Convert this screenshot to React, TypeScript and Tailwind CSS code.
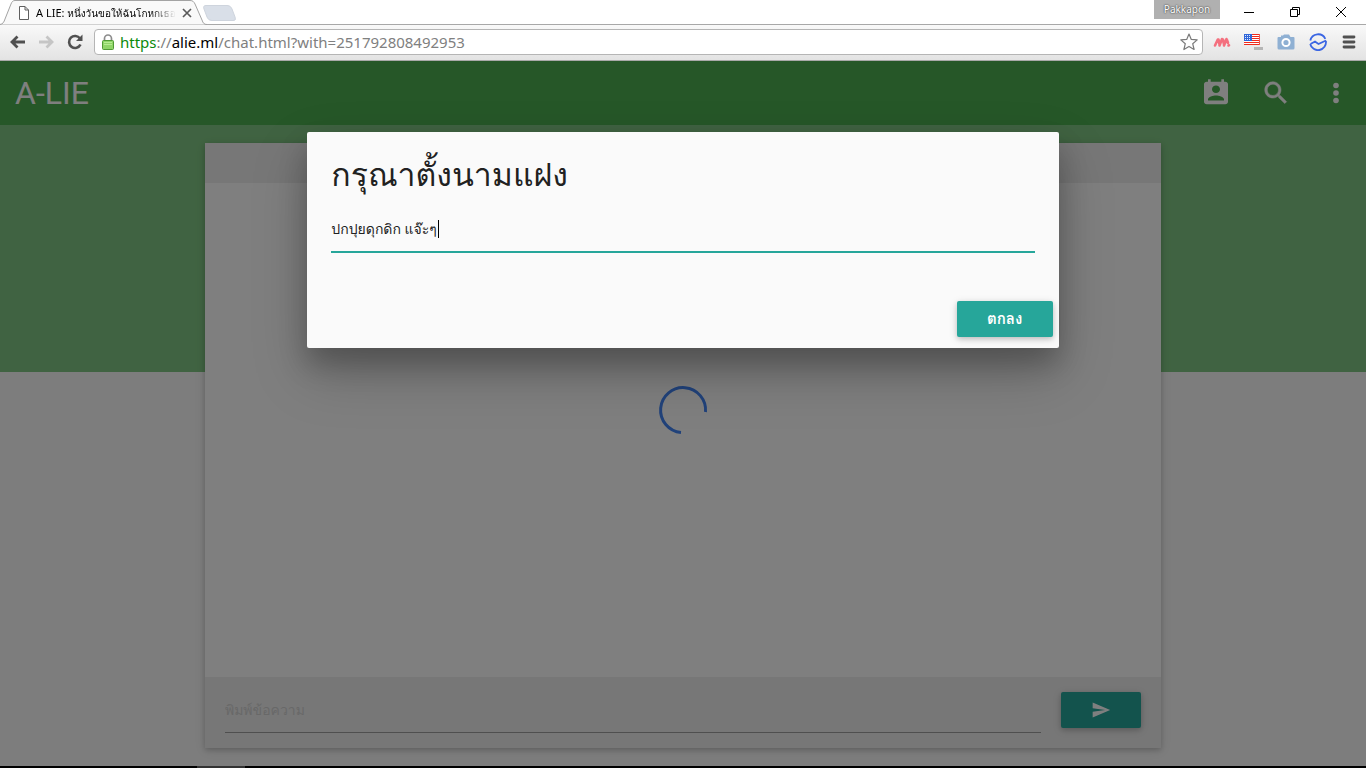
import React, { useState } from "react";

const THAI = "font-['Roboto','Loma','Garuda','Waree','Noto_Sans_Thai_Looped','Noto_Sans_Thai','Noto_Sans',sans-serif]";

const STRIPES = [1, 3, 5, 7, 9, 11];

function TabStrip() {
  return (
    <div className="flex h-6 items-start bg-white">
      <div className="relative flex h-6 w-[206px] shrink-0 items-center pl-[18px] pt-0.5">
        <svg className="absolute left-0 top-0" width="240" height="25" viewBox="0 0 240 25" aria-hidden="true">
          <path d="M0 24.5 C3 24 4 22 5 19 L11 4 C12 1.500 13 .5 15 .5 H190 C193 .5 194 2 195 4 L202 20 C203 23 204 24.500 207 24.500" fill="#f9f9f9" stroke="#a3a3a3" />
          <path d="M206 5.500 H227 C230 5.500 231 7 232 9 L235 17 C236 20 235 20.500 233 20.500 H212 C209 20.500 208 19 207 17 L204 9 C203 6.500 204 5.500 206 5.500Z" fill="#d9dfe8" stroke="#ced4dd" />
        </svg>
        <svg className="relative shrink-0" width="12" height="14" viewBox="0 0 12 14" fill="#fff" stroke="#5f5f5f" aria-hidden="true">
          <path d="M1.500 .5 H7 L10.500 4 V13.500 H1.500Z M7 .5 V4 H10.500" />
        </svg>
        <span className="relative ml-1.5 w-[140px] whitespace-nowrap font-['Noto_Sans','Loma',sans-serif] text-[11px] leading-5 text-black [mask-image:linear-gradient(to_right,#000_115px,transparent_140px)]">
          A LIE: <span className="text-[10px]">หนึ่งวันขอให้ฉันโกหกเธอ</span>
        </span>
        <button type="button" aria-label="Close tab" className="relative ml-1.5 shrink-0">
          <svg width="10" height="10" viewBox="0 0 10 10" stroke="#5a5a5a" strokeWidth="1.7"><path d="M1 1 9 9M9 1 1 9" /></svg>
        </button>
      </div>
      <div className="ml-auto flex items-start">
        <span className="flex h-[19px] w-[66px] items-center justify-center bg-[#b0b0b0] font-['Noto_Sans',sans-serif] text-[10px] text-white [text-shadow:0_0_2px_#444,0_0_1px_#444]">Pakkapon</span>
        <div className="ml-1.5 mr-0.5 flex h-6 items-center">
          <button type="button" aria-label="Minimize" className="flex w-[46px] justify-center"><svg width="10" height="10" stroke="#000"><path d="M0 5.500H10" /></svg></button>
          <button type="button" aria-label="Restore" className="flex w-[46px] justify-center"><svg width="10" height="10" fill="none" stroke="#000"><path d="M.5 2.500H7.500V9.500H.5Z M2.500 2.500V.5H9.500V7.500H7.500" /></svg></button>
          <button type="button" aria-label="Close" className="flex w-[46px] justify-center"><svg width="10" height="10" stroke="#000"><path d="M0 0 10 10M10 0 0 10" /></svg></button>
        </div>
      </div>
    </div>
  );
}

function Flag() {
  return (
    <svg className="block" width="20" height="18" viewBox="0 0 20 18" shapeRendering="crispEdges" aria-hidden="true">
      <rect x="0" y="1" width="16" height="11" fill="#ffffff" />
      {STRIPES.map((y) => <rect key={y} x="0" y={y} width="16" height="1" fill="#f02a1c" />)}
      <rect x="15" y="1" width="1" height="11" fill="#ee5a50" />
      <rect x="0" y="1" width="8" height="7" fill="#2f66d8" />
      {[2, 4, 6].map((y) => [1, 3, 5].map((x) => <rect key={x + "-" + y} x={x} y={y} width="1" height="1" fill="#dce8ff" />))}
      <rect x="10" y="14" width="9" height="3" fill="#b5b5b5" />
    </svg>
  );
}

function AddressBar() {
  return (
    <div className="flex h-[37px] items-center border-y border-t-[#a8a8a8] border-b-[#a9a9a9] bg-gradient-to-b from-[#f9f9f9] to-[#e3e3e3] pb-px pl-[9px] pr-2.5">
      <button type="button" aria-label="Back"><svg className="block" width="17" height="14" viewBox="0 0 17 14" fill="none" stroke="#505050" strokeWidth="2.800"><path d="M16 7H3M8.500 1.500 3 7l5.500 5.500" /></svg></button>
      <button type="button" aria-label="Forward" className="ml-3"><svg className="block" width="17" height="14" viewBox="0 0 17 14" fill="none" stroke="#c5c5c5" strokeWidth="2.800"><path d="M1 7H14M8.500 1.500 14 7l-5.500 5.500" /></svg></button>
      <button type="button" aria-label="Reload" className="ml-3">
        <svg className="block" width="16" height="16" viewBox="0 0 16 16"><path d="M13 4.500A6 6 0 1 0 13.500 10.500" fill="none" stroke="#505050" strokeWidth="2.600" /><path d="M15.500 .5V7H9Z" fill="#505050" /></svg>
      </button>
      <div className="ml-[11px] flex h-[26px] min-w-0 flex-1 items-center rounded-sm border border-[#b5b5b5] bg-white pl-[7px] pr-1">
        <svg className="shrink-0" width="12" height="16" viewBox="0 0 12 16" aria-hidden="true">
          <path d="M2.500 8V4.500a3.500 3.500 0 0 1 7 0V8" fill="none" stroke="#8c8c8c" strokeWidth="1.700" />
          <rect x=".5" y="6.500" width="11" height="9" rx="1" fill="#8fd568" stroke="#4f9a34" />
          <path d="M2 8.500h8M2 10.500h8" stroke="#b6ec92" />
        </svg>
        <span className="ml-1.5 whitespace-nowrap font-['Noto_Sans',sans-serif] text-[15px] leading-5 text-[#808080]">
          <span className="text-[#0b8a0b]">https</span>://<span className="text-black">alie.ml</span>/chat.html?with=251792808492953
        </span>
        <button type="button" aria-label="Bookmark this page" className="ml-auto">
          <svg className="block" width="18" height="18" viewBox="0 0 18 18"><path d="M9 1 11.300 6.400 17.200 6.900 12.700 10.700 14.100 16.500 9 13.400 3.900 16.500 5.300 10.700 .8 6.900 6.700 6.400Z" fill="#fff" stroke="#7a7a7a" strokeWidth="1.200" strokeLinejoin="round" /></svg>
        </button>
      </div>
      <div className="flex items-center pl-2.5">
        <button type="button" aria-label="Extension" className="w-[31px]">
          <svg className="block" width="18" height="12" viewBox="0 0 18 12" fill="none" stroke="#f4707f" strokeWidth="2.600" strokeLinecap="round"><path d="M2 9.500 4.800 3.500M6.500 9.500 9 3M11 9.500 13.500 3M5.500 3.500 6.500 8.500M10 3.500 11 8.500M14 4 15 7" /><path d="M15.500 9.500 16 9.300" /></svg>
        </button>
        <button type="button" aria-label="Language" className="w-[33px]"><Flag /></button>
        <button type="button" aria-label="Capture" className="w-8">
          <svg className="block" width="18" height="16" viewBox="0 0 18 16"><path d="M1.500 3H4V1.500H6L7 .5H12L13.500 3H16.500Q17.500 3 17.500 4V14Q17.500 15.500 16 15.500H2Q.5 15.500 .5 14V4Q.5 3 1.500 3Z" fill="#8fb0d3" /><circle cx="9" cy="8.500" r="3.600" fill="#8fb0d3" stroke="#fff" strokeWidth="2" /></svg>
        </button>
        <button type="button" aria-label="Messenger extension" className="w-[33px]">
          <svg className="block" width="18" height="18" viewBox="0 0 18 18" fill="none" stroke="#3b66e3" strokeWidth="1.800"><path d="M1.300 7.500A8 8 0 0 1 16.300 5.800M16.900 8A8 8 0 0 1 1.200 11M1.500 11 6 8.500 9.500 11 17 7.500" /></svg>
        </button>
        <button type="button" aria-label="Menu"><svg className="block" width="14" height="14" viewBox="0 0 14 14" stroke="#505050" strokeWidth="2.800" strokeLinecap="round"><path d="M2 2H12M2 7H12M2 12H12" /></svg></button>
      </div>
    </div>
  );
}

function AppBar() {
  return (
    <header className="flex h-16 shrink-0 items-center bg-[#4caf50] pl-[15px] pr-3 text-white">
      <h1 className="font-['Roboto',sans-serif] text-[32px] leading-10">A-LIE</h1>
      <nav className="ml-auto flex items-center gap-6">
        <button type="button" aria-label="Contacts" className="flex size-9 items-center justify-center"><svg width="32" height="30" viewBox="0 0 24 24" preserveAspectRatio="none" fill="currentColor"><path d="M19 3h-1V1h-2v2H8V1H6v2H5c-1.110 0-2 .9-2 2v14c0 1.100.89 2 2 2h14c1.100 0 2-.9 2-2V5c0-1.100-.9-2-2-2zm-7 3c1.660 0 3 1.340 3 3s-1.340 3-3 3-3-1.340-3-3 1.340-3 3-3zm6 12H6v-1c0-2 4-3.100 6-3.100s6 1.100 6 3.100v1z" /></svg></button>
        <button type="button" aria-label="Search" className="flex size-9 items-center justify-center"><svg width="30" height="30" viewBox="0 0 24 24" fill="currentColor" stroke="currentColor" strokeWidth=".4"><path d="M15.500 14h-.79l-.28-.27C15.410 12.590 16 11.110 16 9.500 16 5.910 13.090 3 9.500 3S3 5.910 3 9.500 5.910 16 9.500 16c1.610 0 3.090-.59 4.230-1.570l.27.28v.79l5 4.990L20.490 19l-4.990-5zm-6 0C7.010 14 5 11.990 5 9.500S7.010 5 9.500 5 14 7.010 14 9.500 11.990 14 9.500 14z" /></svg></button>
        <button type="button" aria-label="More" className="flex size-9 items-center justify-center"><svg width="32" height="32" viewBox="0 0 32 32" fill="currentColor"><circle cx="16" cy="8.500" r="2.800" /><circle cx="16" cy="16" r="2.800" /><circle cx="16" cy="23.500" r="2.800" /></svg></button>
      </nav>
    </header>
  );
}

function ChatCard() {
  return (
    <section className="mx-auto flex w-[70%] flex-1 flex-col bg-white shadow-[0_2px_5px_0_rgba(0,0,0,0.16),0_2px_10px_0_rgba(0,0,0,0.12)]">
      <div className="h-10 bg-[#eee]" />
      <div className="flex flex-1 items-center justify-center pb-10">
        <svg width="50" height="50" viewBox="0 0 50 50" fill="none" stroke="#4285f4" strokeWidth="3" role="img" aria-label="Loading"><path d="M47.500 27A22.500 22.500 0 1 0 23 47.500" /></svg>
      </div>
      <form className="flex h-[71px] items-start gap-5 bg-[#eee] px-5 pt-[15px]" onSubmit={(e) => e.preventDefault()}>
        <input type="text" aria-label="พิมพ์ข้อความ" placeholder="พิมพ์ข้อความ" className={`${THAI} h-[41px] min-w-0 flex-1 border-b border-[#9e9e9e] bg-transparent pb-1 text-sm outline-none placeholder:text-[#d1d1d1]`} />
        <button type="submit" aria-label="Send" className="flex h-9 w-20 items-center justify-center rounded-xs bg-[#26a69a] text-white shadow-[0_2px_5px_0_rgba(0,0,0,0.16),0_2px_10px_0_rgba(0,0,0,0.12)]">
          <svg width="20" height="20" viewBox="0 0 24 24" fill="currentColor"><path d="M2.010 21L23 12 2.010 3 2 10l15 2-15 2z" /></svg>
        </button>
      </form>
    </section>
  );
}

function NicknameDialog() {
  const [name, setName] = useState("ปกปุยดุกดิก แจ๊ะๆ");
  return (
    <div className="absolute inset-0 bg-black/50 pt-[71px]">
      <div role="dialog" aria-modal="true" aria-labelledby="nickname-title" className={`${THAI} mx-auto w-[55%] rounded-xs bg-[#fafafa] shadow-[0_16px_28px_0_rgba(0,0,0,0.22),0_25px_55px_0_rgba(0,0,0,0.21)]`}>
        <div className="px-6 pt-5">
          <h2 id="nickname-title" className="text-[32px] leading-[46px] text-[#212121]"><label htmlFor="nickname">กรุณาตั้งนามแฝง</label></h2>
          <div className="relative mt-2 flex h-[47px] border-b-2 border-[#26a69a]">
            <input id="nickname" type="text" value={name} onChange={(e) => setName(e.target.value)} className="h-[45px] w-full bg-transparent text-sm text-[#212121] outline-none" />
            <span className="absolute left-[107px] top-3.5 h-[18px] w-px bg-black" />
          </div>
        </div>
        <div className="flex justify-end px-1.5 pb-[11px] pt-12">
          <button type="button" className="h-9 w-24 rounded-xs bg-[#26a69a] text-[15px] font-bold text-white shadow-[0_2px_5px_0_rgba(0,0,0,0.16),0_2px_10px_0_rgba(0,0,0,0.12)]">ตกลง</button>
        </div>
      </div>
    </div>
  );
}

export default function App() {
  return (
    <div className="flex min-h-screen flex-col bg-white">
      <TabStrip />
      <AddressBar />
      <div className="relative flex flex-1 flex-col">
        <AppBar />
        <main className="flex flex-1 flex-col bg-[linear-gradient(#81c784_247px,#fafafa_247px)] pb-[18px] pt-[18px]">
          <ChatCard />
        </main>
        <NicknameDialog />
      </div>
      <div className="flex h-0.5 bg-black pl-[197px]"><span className="w-12 bg-[#333]" /></div>
    </div>
  );
}
